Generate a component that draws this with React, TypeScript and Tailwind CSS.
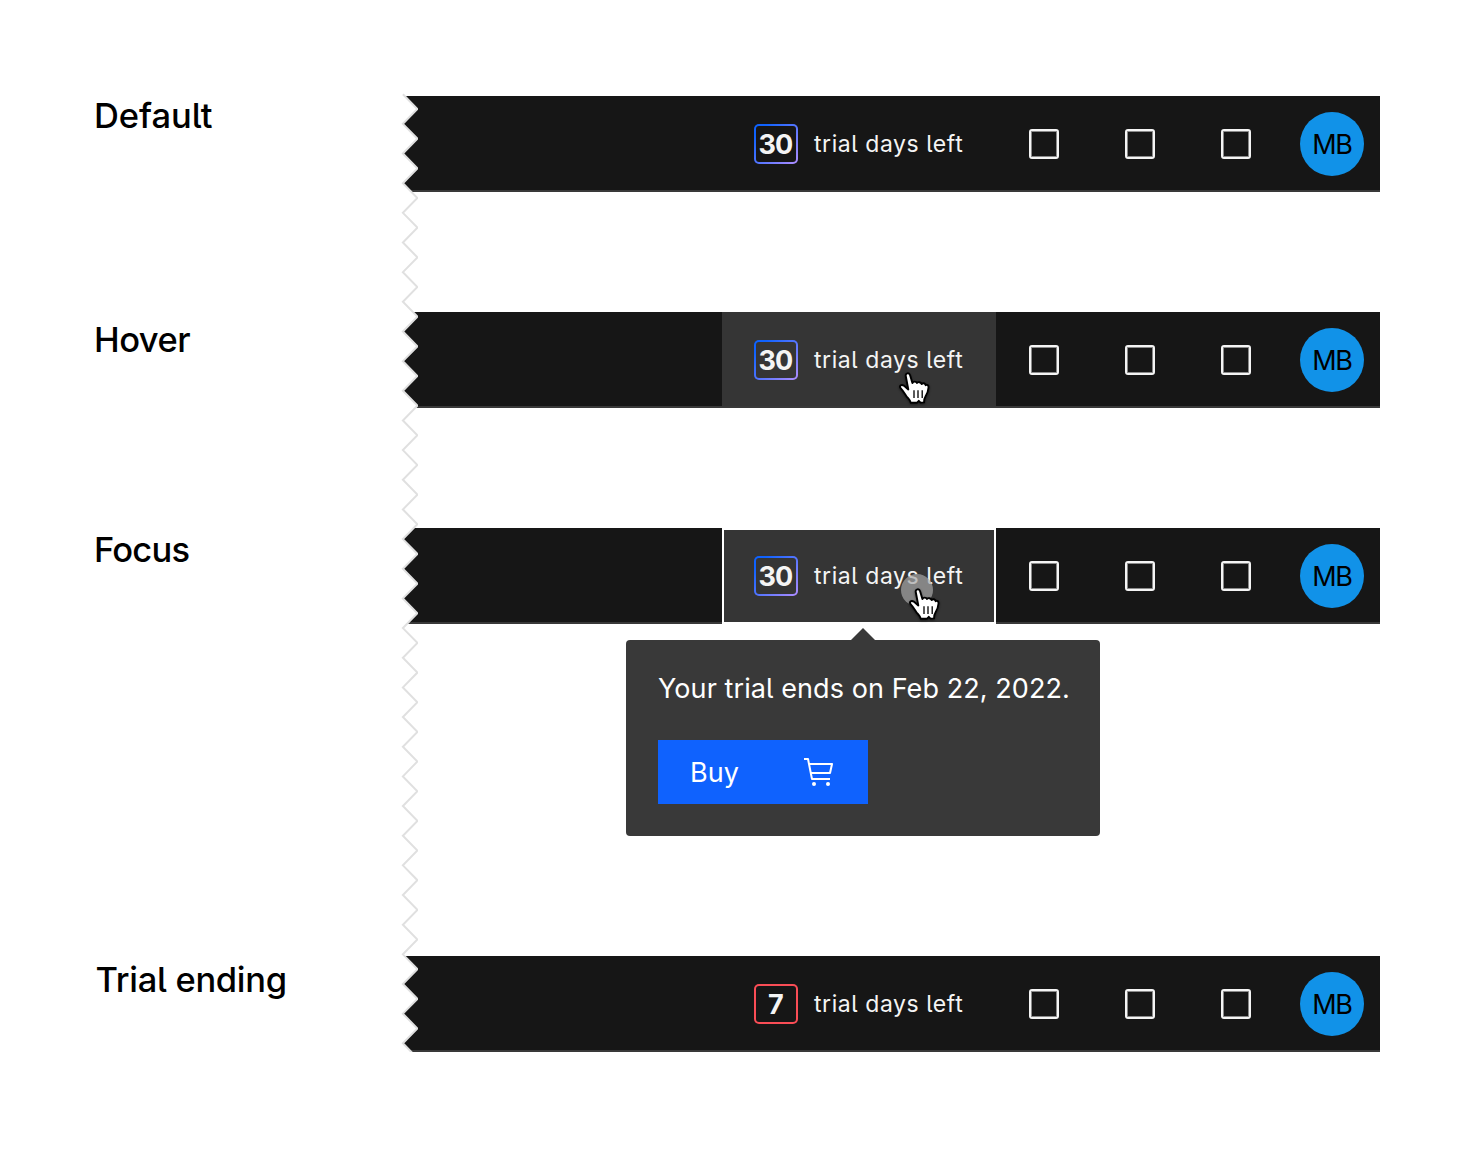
import React from "react";

type Variant = "default" | "hover" | "focus";

function Spine() {
  const points: string[] = [];
  for (let i = 0; i <= 65; i++) {
    const y = 94.2 + i * 14.83;
    points.push(`${i % 2 === 0 ? 402.9 : 417.4},${y.toFixed(2)}`);
  }
  const line = points.join(" ");
  return (
    <svg className="pointer-events-none absolute left-0 top-0" width="418" height="1052" viewBox="0 0 418 1052" fill="none">
      <polygon points={`398,94 ${line} 398,1060`} fill="#fff" />
      <polyline points={line} stroke="#e0e0e0" strokeWidth="2" />
    </svg>
  );
}

function Hand() {
  return (
    <svg width="40" height="40" viewBox="0 0 40 40" className="drop-shadow-[0_1px_1px_rgba(0,0,0,0.5)]">
      <path
        d="M10.8 6.2C10.1 3 14.2 2.2 15.1 5.3L17.4 13C18.2 11.2 21.2 11.2 21.9 13C23 11.6 26 12 26.6 14C28 12.6 30.2 13 30.6 15.2C32 14.2 33.8 15.2 33.5 17.5C33.2 21.5 32.4 23.5 30.6 26.2C29.4 28.2 29 30 29.1 32.4L25.5 32.6L23.8 30.8L21.8 32.8H15.8C15.6 30.4 12.7 28.2 10.9 25.4C8.9 22.4 7.7 20.4 5.8 18.4C3.8 16.2 6.2 13.8 8.8 15.6L13.3 19.4Z"
        fill="#fff"
        stroke="#000"
        strokeWidth="1.9"
        strokeLinejoin="round"
      />
      <path d="M19 20.3V28M23 20.3V28M27.2 20.3V28" stroke="#000" strokeWidth="1.3" />
    </svg>
  );
}

function Cart() {
  return (
    <svg width="32" height="32" viewBox="0 0 32 32" fill="#fff">
      <circle cx="10" cy="28" r="2" />
      <circle cx="24" cy="28" r="2" />
      <path d="M28 7H5.82L5 2.8A1 1 0 0 0 4 2H0V4H3.18L7 23.2A1 1 0 0 0 8 24H26V22H8.82L8 18H26A1 1 0 0 0 27 17.22L29 8.22A1 1 0 0 0 28 7ZM25.2 16H7.62L6.22 9H26.75Z" />
    </svg>
  );
}

function DayBadge({ days, ending }: { days: number; ending?: boolean }) {
  return (
    <span
      className={
        "h-10 w-11 shrink-0 rounded-[5px] p-[2px] " +
        (ending ? "bg-[#fa4d56]" : "bg-[linear-gradient(135deg,#0f62fe_15%,#a68bff_95%)]")
      }
    >
      <span className="flex h-full w-full items-center justify-center rounded-[3px] bg-[#161616] pr-px text-[27px] font-bold leading-none tracking-[-0.7px] text-[#f4f4f4]">
        {days}
      </span>
    </span>
  );
}

function Bar({ variant = "default", days = 30, ending }: { variant?: Variant; days?: number; ending?: boolean }) {
  const cell =
    variant === "default"
      ? "h-24"
      : variant === "hover"
        ? "h-24 border-b-2 border-[#393939] bg-[#353535]"
        : "h-24 bg-[#353535] outline-2 -outline-offset-2 outline-white";
  return (
    <div className="flex h-24 w-[976px] items-start bg-[#161616] shadow-[inset_0_-2px_0_#393939]">
      <div className={"relative ml-[318px] flex w-[274px] pl-8 pt-7 " + cell}>
        <div className={variant === "default" ? "contents" : "contents [&_span_span]:bg-[#353535]"}>
          <DayBadge days={days} ending={ending} />
        </div>
        <span className="ml-4 whitespace-nowrap text-[23px] font-normal leading-10 tracking-[0.57px] text-[#f4f4f4]">trial days left</span>
        {variant === "hover" && (
          <div className="absolute left-[173px] top-[58px]">
            <Hand />
          </div>
        )}
        {variant === "focus" && (
          <>
            <div className="absolute left-[179px] top-[46px] h-8 w-8 rounded-full bg-[#a8a8a8]/70" />
            <div className="absolute left-[183px] top-[58px]">
              <Hand />
            </div>
          </>
        )}
      </div>
      <div className="flex h-24 flex-1 items-center pl-[33px]">
        {[0, 1, 2].map((i) => (
          <div
            key={i}
            className="mr-[66px] h-[30px] w-[30px] shrink-0 rounded-[3px] border-2 border-[#f4f4f4] shadow-[inset_0_0_0_1px_#8a8a8a]"
          />
        ))}
        <div className="-ml-[17px] flex h-16 w-16 shrink-0 items-center justify-center rounded-full bg-[#1192e8] text-[27px] font-normal leading-none tracking-[-1.4px] text-black">
          MB
        </div>
      </div>
    </div>
  );
}

function Row({ label, children, className }: { label: string; children: React.ReactNode; className: string }) {
  return (
    <section className="flex">
      <h2 className={"w-[404px] shrink-0 whitespace-nowrap text-[34.5px] font-medium leading-10 text-black " + className}>{label}</h2>
      {children}
    </section>
  );
}

function TrialPopover() {
  return (
    <div className="ml-[626px] mt-1 flex w-[474px] flex-col">
      <svg className="ml-[225px]" width="24" height="12" viewBox="0 0 24 12">
        <path d="M0 12L12 0L24 12Z" fill="#393939" />
      </svg>
      <div className="flex h-[196px] flex-col items-start rounded bg-[#393939] px-8 pt-[29px]">
        <p className="whitespace-nowrap text-[27px] font-normal leading-10 tracking-[0.08px] text-white">Your trial ends on Feb 22, 2022.</p>
        <button className="mt-[31px] flex h-16 w-[210px] items-center justify-between bg-[#0f62fe] px-8 text-[27px] font-normal text-white">
          <span className="pt-0.5">Buy</span>
          <Cart />
        </button>
      </div>
    </div>
  );
}

export default function App() {
  return (
    <main className="relative flex h-[1152px] w-[1476px] flex-col overflow-hidden bg-white pt-24 font-['Inter','Noto_Sans',sans-serif] [font-feature-settings:'cv05']">
      <Row label="Default" className="pl-[94px] tracking-[-0.05px]">
        <Bar />
      </Row>
      <div className="h-[120px]" />
      <Row label="Hover" className="pl-[94px] pt-2 tracking-[-0.5px]">
        <Bar variant="hover" />
      </Row>
      <div className="h-[120px]" />
      <Row label="Focus" className="pl-[94px] pt-0.5 tracking-[-0.8px]">
        <Bar variant="focus" />
      </Row>
      <TrialPopover />
      <div className="h-[120px]" />
      <Row label="Trial ending" className="pl-[95.5px] pt-1 tracking-[-0.3px]">
        <Bar days={7} ending />
      </Row>
      <Spine />
    </main>
  );
}
